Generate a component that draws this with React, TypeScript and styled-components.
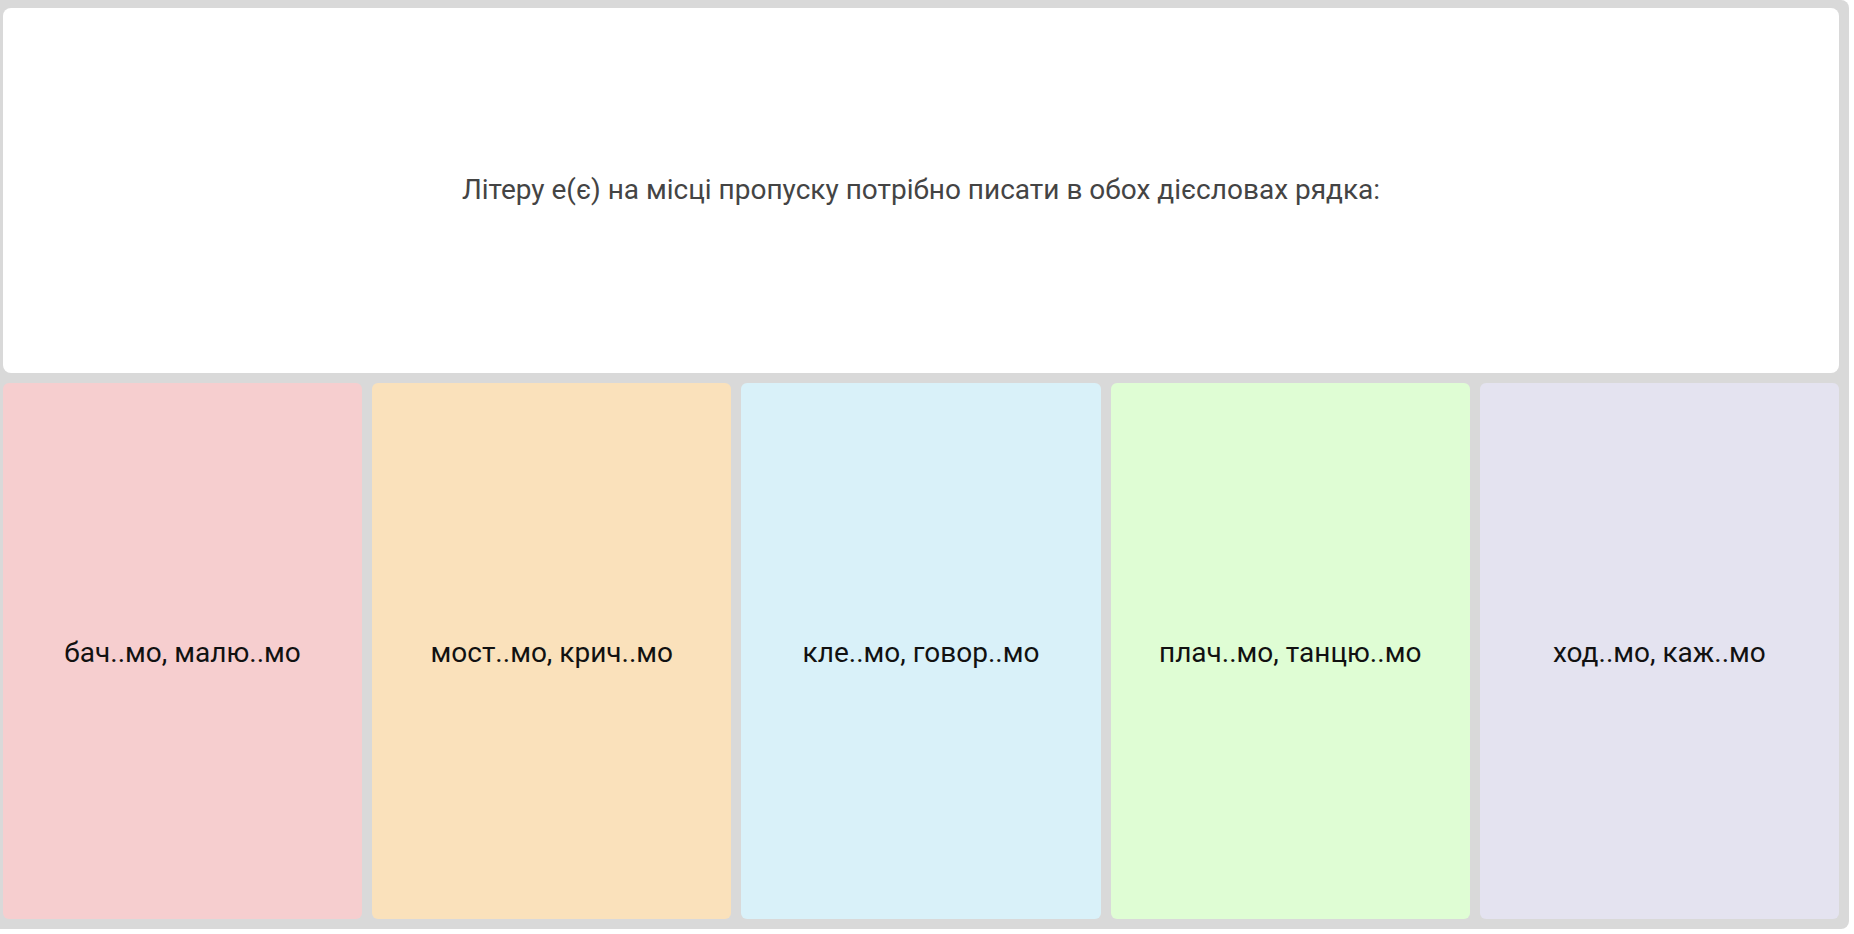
import React from "react";
import styled, { createGlobalStyle } from "styled-components";

const GlobalStyle = createGlobalStyle`
  html, body {
    margin: 0;
    padding: 0;
    background: #ffffff;
    font-family: Roboto, "Liberation Sans", Arial, sans-serif;
  }
`;

const Board = styled.div`
  width: 1849px;
  height: 929px;
  box-sizing: border-box;
  background: #d9d9d9;
  border-radius: 0 8px 8px 0;
  padding: 8px 10px 10px 3px;
  display: grid;
  grid-template-rows: 365px 1fr;
  row-gap: 10px;
`;

const Question = styled.div`
  background: #ffffff;
  border-radius: 8px;
  display: flex;
  align-items: center;
  justify-content: center;
  padding-bottom: 2px;
  font-size: 28px;
  color: #444444;
`;

const Row = styled.div`
  display: grid;
  grid-template-columns: repeat(5, 1fr);
  column-gap: 10px;
`;

const Card = styled.div<{ $bg: string }>`
  background: ${(p) => p.$bg};
  border-radius: 6px;
  display: flex;
  align-items: center;
  justify-content: center;
  padding-top: 2px;
  font-size: 28px;
  color: #111111;
`;

export default function App() {
  const answers = [
    { text: "бач..мо, малю..мо", bg: "#f6cecf" },
    { text: "мост..мо, крич..мо", bg: "#fae1bb" },
    { text: "кле..мо, говор..мо", bg: "#d9f1f9" },
    { text: "плач..мо, танцю..мо", bg: "#dffdd4" },
    { text: "ход..мо, каж..мо", bg: "#e4e3f0" },
  ];

  return (
    <>
      <GlobalStyle />
      <Board>
        <Question>
          Літеру е(є) на місці пропуску потрібно писати в обох дієсловах рядка:
        </Question>
        <Row>
          {answers.map((a, index) => (
            <Card key={index} $bg={a.bg}>
              {a.text}
            </Card>
          ))}
        </Row>
      </Board>
    </>
  );
}
